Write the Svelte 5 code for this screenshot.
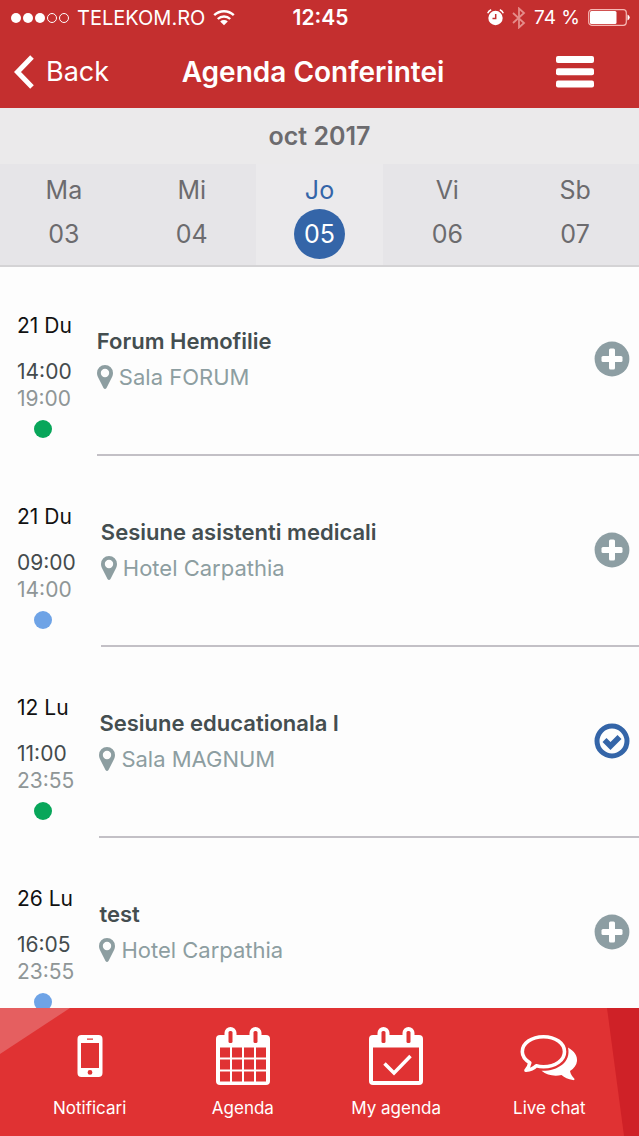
<script lang="ts">
	interface Session {
		date: string;
		start: string;
		end: string;
		title: string;
		place: string;
		track: string;
		saved: boolean;
	}

	const days = [
		{ name: 'Ma', number: '03' },
		{ name: 'Mi', number: '04' },
		{ name: 'Jo', number: '05' },
		{ name: 'Vi', number: '06' },
		{ name: 'Sb', number: '07' }
	];

	let selected = $state('05');

	let sessions: Session[] = $state([
		{ date: '21 Du', start: '14:00', end: '19:00', title: 'Forum Hemofilie', place: 'Sala FORUM', track: 'green', saved: false },
		{ date: '21 Du', start: '09:00', end: '14:00', title: 'Sesiune asistenti medicali', place: 'Hotel Carpathia', track: 'blue', saved: false },
		{ date: '12 Lu', start: '11:00', end: '23:55', title: 'Sesiune educationala I', place: 'Sala MAGNUM', track: 'green', saved: true },
		{ date: '26 Lu', start: '16:05', end: '23:55', title: 'test', place: 'Hotel Carpathia', track: 'blue', saved: false }
	]);
</script>

<div class="app">
	<header>
		<div class="status">
			<div class="status-left">
				<svg width="58" height="12" viewBox="0 0 58 12" aria-hidden="true">
					<g fill="#fff">
						<circle cx="5" cy="6" r="5" />
						<circle cx="17" cy="6" r="5" />
						<circle cx="29" cy="6" r="5" />
					</g>
					<g fill="none" stroke="#fff">
						<circle cx="41" cy="6" r="4.5" />
						<circle cx="53" cy="6" r="4.5" />
					</g>
				</svg>
				<span class="carrier">TELEKOM.RO</span>
				<svg width="22" height="17" viewBox="0 0 22 17" fill="none" stroke="#fff" stroke-width="2.4" aria-hidden="true">
					<path d="M1.2 6.2a14 14 0 0 1 19.6 0" />
					<path d="M4.8 10a9 9 0 0 1 12.4 0" />
					<path d="M11 16.2l-3.8-3.8a5.6 5.6 0 0 1 7.6 0z" fill="#fff" stroke="none" />
				</svg>
			</div>
			<span class="clock">12:45</span>
			<div class="status-right">
				<svg width="17" height="17" viewBox="0 0 17 17" aria-hidden="true">
					<circle cx="8.5" cy="9" r="7.2" fill="#fff" />
					<path d="M.7 4.2A6 6 0 0 1 4.2.8M16.3 4.2A6 6 0 0 0 12.8.8" fill="none" stroke="#fff" stroke-width="1.5" />
					<path d="M8.7 5v4.5H5.5" fill="none" stroke="#c42f2f" stroke-width="1.5" />
				</svg>
				<svg width="14" height="22" viewBox="0 0 14 22" fill="none" stroke="#e58d8a" stroke-width="1.8" aria-hidden="true">
					<path d="M1 6l11 10-5 4.500v-19L12 6 1 16" />
				</svg>
				<span class="percent">74 %</span>
				<svg width="42" height="17" viewBox="0 0 42 17" aria-hidden="true">
					<rect x=".7" y=".7" width="37.6" height="15.6" rx="3" fill="none" stroke="#f6b9b5" stroke-width="1.2" />
					<rect x="2" y="2" width="26.5" height="13" rx="1.5" fill="#fff" />
					<path d="M39.5 5.5q2.2 1 2.2 3t-2.2 3z" fill="#fff" />
				</svg>
			</div>
		</div>
		<nav class="titlebar">
			<button class="back">
				<svg width="20" height="34" viewBox="0 0 20 34" fill="none" stroke="#fff" stroke-width="5" aria-hidden="true">
					<path d="M18 2L3.5 17 18 32" />
				</svg>
				Back
			</button>
			<h1>Agenda Conferintei</h1>
			<button class="menu" aria-label="Menu">
				<svg width="38" height="32" viewBox="0 0 38 32" fill="#fff" aria-hidden="true">
					<rect y="0" width="38" height="7" rx="2" />
					<rect y="12.3" width="38" height="7" rx="2" />
					<rect y="24.6" width="38" height="7" rx="2" />
				</svg>
			</button>
		</nav>
	</header>

	<section class="calendar">
		<h2>oct 2017</h2>
		<div class="days">
			{#each days as day}
				<button class="day" class:active={selected === day.number} onclick={() => (selected = day.number)}>
					<span>{day.name}</span>
					<span class="number">{day.number}</span>
				</button>
			{/each}
		</div>
	</section>

	<main>
		{#each sessions as session}
			<article>
				<div class="when">
					<p class="date">{session.date}</p>
					<p class="start">{session.start}</p>
					<p class="end">{session.end}</p>
					<span class="dot {session.track}"></span>
				</div>
				<div class="what">
					<div>
						<h3>{session.title}</h3>
						<p class="place">
							<svg width="16" height="24" viewBox="0 0 16 24" aria-hidden="true">
								<path d="M8 0a8 8 0 0 0-8 8c0 1.500.3 2.700.8 3.800l5.700 11.300q1.500 1.800 3 0l5.700-11.300c.5-1.100.8-2.300.8-3.800a8 8 0 0 0-8-8zm0 3.800a4.200 4.200 0 1 1 0 8.400 4.200 4.200 0 0 1 0-8.400z" />
							</svg>
							{session.place}
						</p>
					</div>
					<button
						class="toggle"
						aria-label={session.saved ? 'Remove from my agenda' : 'Add to my agenda'}
						onclick={() => (session.saved = !session.saved)}
					>
						<svg width="36" height="36" viewBox="0 0 36 36" aria-hidden="true">
							{#if session.saved}
								<circle cx="18" cy="18" r="15" fill="none" stroke="#3465a8" stroke-width="5" />
								<path d="M10.5 17l6 6 9-9" fill="none" stroke="#3465a8" stroke-width="5.6" />
							{:else}
								<circle cx="18" cy="18" r="17.4" fill="#8d9ea3" />
								<rect x="15" y="7.5" width="6" height="21" rx="1.5" fill="#fff" />
								<rect x="7.500" y="15" width="21" height="6" rx="1.5" fill="#fff" />
							{/if}
						</svg>
					</button>
				</div>
			</article>
		{/each}
	</main>

	<footer>
		<svg class="facets" viewBox="0 0 639 128" preserveAspectRatio="none" aria-hidden="true">
			<path d="M0 0h70L0 46z" fill="#e55f60" />
			<path d="M607 0h32v128h-15z" fill="#cf2127" />
		</svg>
		<a href="#notificari">
			<svg width="60" height="60" viewBox="0 0 60 60" aria-hidden="true">
				<path
					fill="#fff"
					fill-rule="evenodd"
					d="M21.5 9h17a4 4 0 0 1 4 4v34a4 4 0 0 1-4 4h-17a4 4 0 0 1-4-4V13a4 4 0 0 1 4-4zm-.5 8v25h18V17zm6-4.500v1.200h6v-1.200zM30 44a2.400 2.400 0 1 0 0 4.800 2.400 2.400 0 0 0 0-4.800z"
				/>
			</svg>
			Notificari
		</a>
		<a href="#agenda">
			<svg width="60" height="60" viewBox="0 0 60 60" aria-hidden="true">
				<rect x="3" y="9" width="54" height="50" rx="4" fill="#fff" />
				<rect x="11.5" y="1" width="12" height="17" rx="6" fill="#fff" />
				<rect x="36.5" y="1" width="12" height="17" rx="6" fill="#fff" />
				<g fill="#e03233">
					<rect x="15.5" y="5" width="4" height="12" rx="1.5" />
					<rect x="40.5" y="5" width="4" height="12" rx="1.5" />
					{#each [21.5, 33.5, 45.5] as y}
						{#each [7, 19, 31, 43] as x}
							<rect {x} {y} width="10" height="10" />
						{/each}
					{/each}
				</g>
			</svg>
			Agenda
		</a>
		<a href="#my-agenda">
			<svg width="60" height="60" viewBox="0 0 60 60" aria-hidden="true">
				<rect x="3" y="9" width="54" height="50" rx="4" fill="#fff" />
				<rect x="11.5" y="1" width="12" height="17" rx="6" fill="#fff" />
				<rect x="36.5" y="1" width="12" height="17" rx="6" fill="#fff" />
				<g fill="#e03233">
					<rect x="15.5" y="5" width="4" height="12" rx="1.5" />
					<rect x="40.5" y="5" width="4" height="12" rx="1.5" />
					<rect x="7" y="21.5" width="46" height="33.5" />
				</g>
				<path d="M18.5 37.5l9.5 9.5 16.5-17" fill="none" stroke="#fff" stroke-width="3.5" />
			</svg>
			My agenda
		</a>
		<a href="#live-chat">
			<svg width="60" height="60" viewBox="0 0 60 60" aria-hidden="true">
				<path
					d="M24.5 10.700c12 0 21 6.600 21 15s-9 15-21 15c-2.500 0-5-.3-7.200-.9-2.600 2.700-5.600 4.100-10.300 4.500 2-2.400 3.400-4.800 3.800-7.600C6.500 34 3.300 30 3.300 25.700c0-8.400 9.200-15 21.200-15z"
					fill="none"
					stroke="#fff"
					stroke-width="3.6"
					stroke-linejoin="round"
				/>
				<path
					d="M49 21.500c6.500 3.500 9.500 8.500 9 13.500-.4 4-3 7.500-7 10 .6 3 2 5.300 4.200 7.400.8.900 0 1.900-1.200 1.700-5-.6-8.500-2.300-11.500-5-7.500 1.500-14.500.2-20-4.300 15 .6 30-8 26.500-23.300z"
					fill="#fff"
				/>
			</svg>
			Live chat
		</a>
	</footer>
</div>

<style>
	:global(body) {
		margin: 0;
	}

	.app {
		display: flex;
		flex-direction: column;
		height: 100vh;
		background: #fdfdfd;
		font-family: Inter, 'Liberation Sans', sans-serif;
	}

	h1,
	h2,
	h3,
	p {
		margin: 0;
	}

	button {
		padding: 0;
		border: 0;
		background: none;
		color: inherit;
		font: inherit;
		cursor: pointer;
	}

	svg {
		flex: none;
	}

	header {
		background: #c42f2f;
		color: #fff;
	}

	.status {
		display: grid;
		grid-template-columns: 1fr auto 1fr;
		align-items: center;
		height: 35px;
		padding: 0 9px 0 11px;
		font-size: 20px;
	}

	.status-left,
	.status-right {
		display: flex;
		align-items: center;
		gap: 8px;
	}

	.status-right {
		justify-content: flex-end;
	}

	.clock {
		font-size: 21px;
		font-weight: 600;
	}

	.percent {
		font-size: 19px;
	}

	.titlebar {
		display: grid;
		grid-template-columns: 1fr auto 1fr;
		align-items: center;
		height: 73px;
		padding: 0 27px 0 14px;
	}

	.back {
		display: flex;
		align-items: center;
		gap: 12px;
		font-size: 27px;
	}

	h1 {
		font-size: 28px;
		font-weight: 600;
	}

	.menu {
		display: flex;
		justify-self: end;
		padding: 0 18px;
	}

	.calendar {
		background: #ebeaeb;
		border-bottom: 2px solid #d4d3d5;
		color: #6c6b6e;
	}

	h2 {
		font-size: 25px;
		font-weight: 600;
		line-height: 56px;
		text-align: center;
	}

	.days {
		display: flex;
	}

	.day {
		display: flex;
		flex: 1;
		flex-direction: column;
		align-items: center;
		padding: 8px 0 6px;
		background: #e6e5e8;
		font-size: 25px;
		line-height: 37px;
	}

	.number {
		width: 51px;
		border-radius: 50%;
		line-height: 50px;
	}

	.active {
		background: #ebeaec;
		color: #3465a8;
	}

	.active .number {
		background: #3465a8;
		color: #fff;
	}

	main {
		flex: 1;
		min-height: 0;
		overflow: hidden;
	}

	article {
		display: flex;
	}

	.when {
		padding: 45px 25px 20px 17px;
		font-size: 21px;
		line-height: 27px;
	}

	.date {
		margin-bottom: 19px;
		color: #111;
	}

	.start {
		color: #444b4d;
	}

	.end {
		color: #8f9697;
	}

	.dot {
		display: block;
		width: 18px;
		height: 18px;
		margin: 8px 0 0 17px;
		border-radius: 50%;
	}

	.green {
		background: #08a65a;
	}

	.blue {
		background: #6ea3e6;
	}

	.what {
		display: flex;
		flex: 1;
		align-items: center;
		justify-content: space-between;
		margin-bottom: 2px;
		padding: 0 9px 4px 0;
		border-bottom: 2px solid #c3c0c6;
	}

	h3 {
		color: #444e50;
		font-size: 22px;
		font-weight: 600;
		line-height: 36px;
	}

	.place {
		display: flex;
		align-items: center;
		gap: 6px;
		color: #8d9ea1;
		font-size: 22px;
		line-height: 36px;
	}

	.place svg {
		fill: #8d9ea1;
	}

	.toggle {
		display: flex;
	}

	footer {
		position: relative;
		display: flex;
		padding: 18px 13px 16px;
		background: #e03233;
	}

	.facets {
		position: absolute;
		inset: 0;
		width: 100%;
		height: 100%;
	}

	footer a {
		position: relative;
		display: flex;
		flex: 1;
		flex-direction: column;
		align-items: center;
		gap: 10px;
		color: #fff;
		font-size: 17px;
		line-height: 24px;
		text-decoration: none;
	}
</style>
